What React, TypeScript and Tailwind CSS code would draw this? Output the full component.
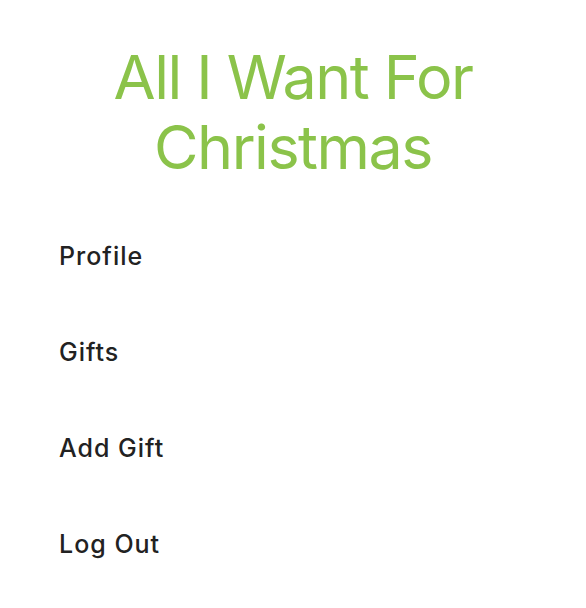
import React from 'react';

const links = ['Profile', 'Gifts', 'Add Gift', 'Log Out'];

const App: React.FC = () => {
  return (
    <div className="min-h-screen bg-white font-['Inter',sans-serif]">
      <h1 className="pt-[42px] px-6 text-center text-[61px] leading-[70px] tracking-[-1.5px] font-normal text-[#8bc34a]">
        All I Want For Christmas
      </h1>
      <nav className="mt-[59px] pl-[59px]">
        <ul className="flex flex-col gap-[66px]">
          {links.map(link => (
            <li key={link}>
              <a href="#" className="text-[25px] leading-[30px] tracking-[1px] font-medium text-[#222222]">
                {link}
              </a>
            </li>
          ))}
        </ul>
      </nav>
    </div>
  );
};

export default App;
